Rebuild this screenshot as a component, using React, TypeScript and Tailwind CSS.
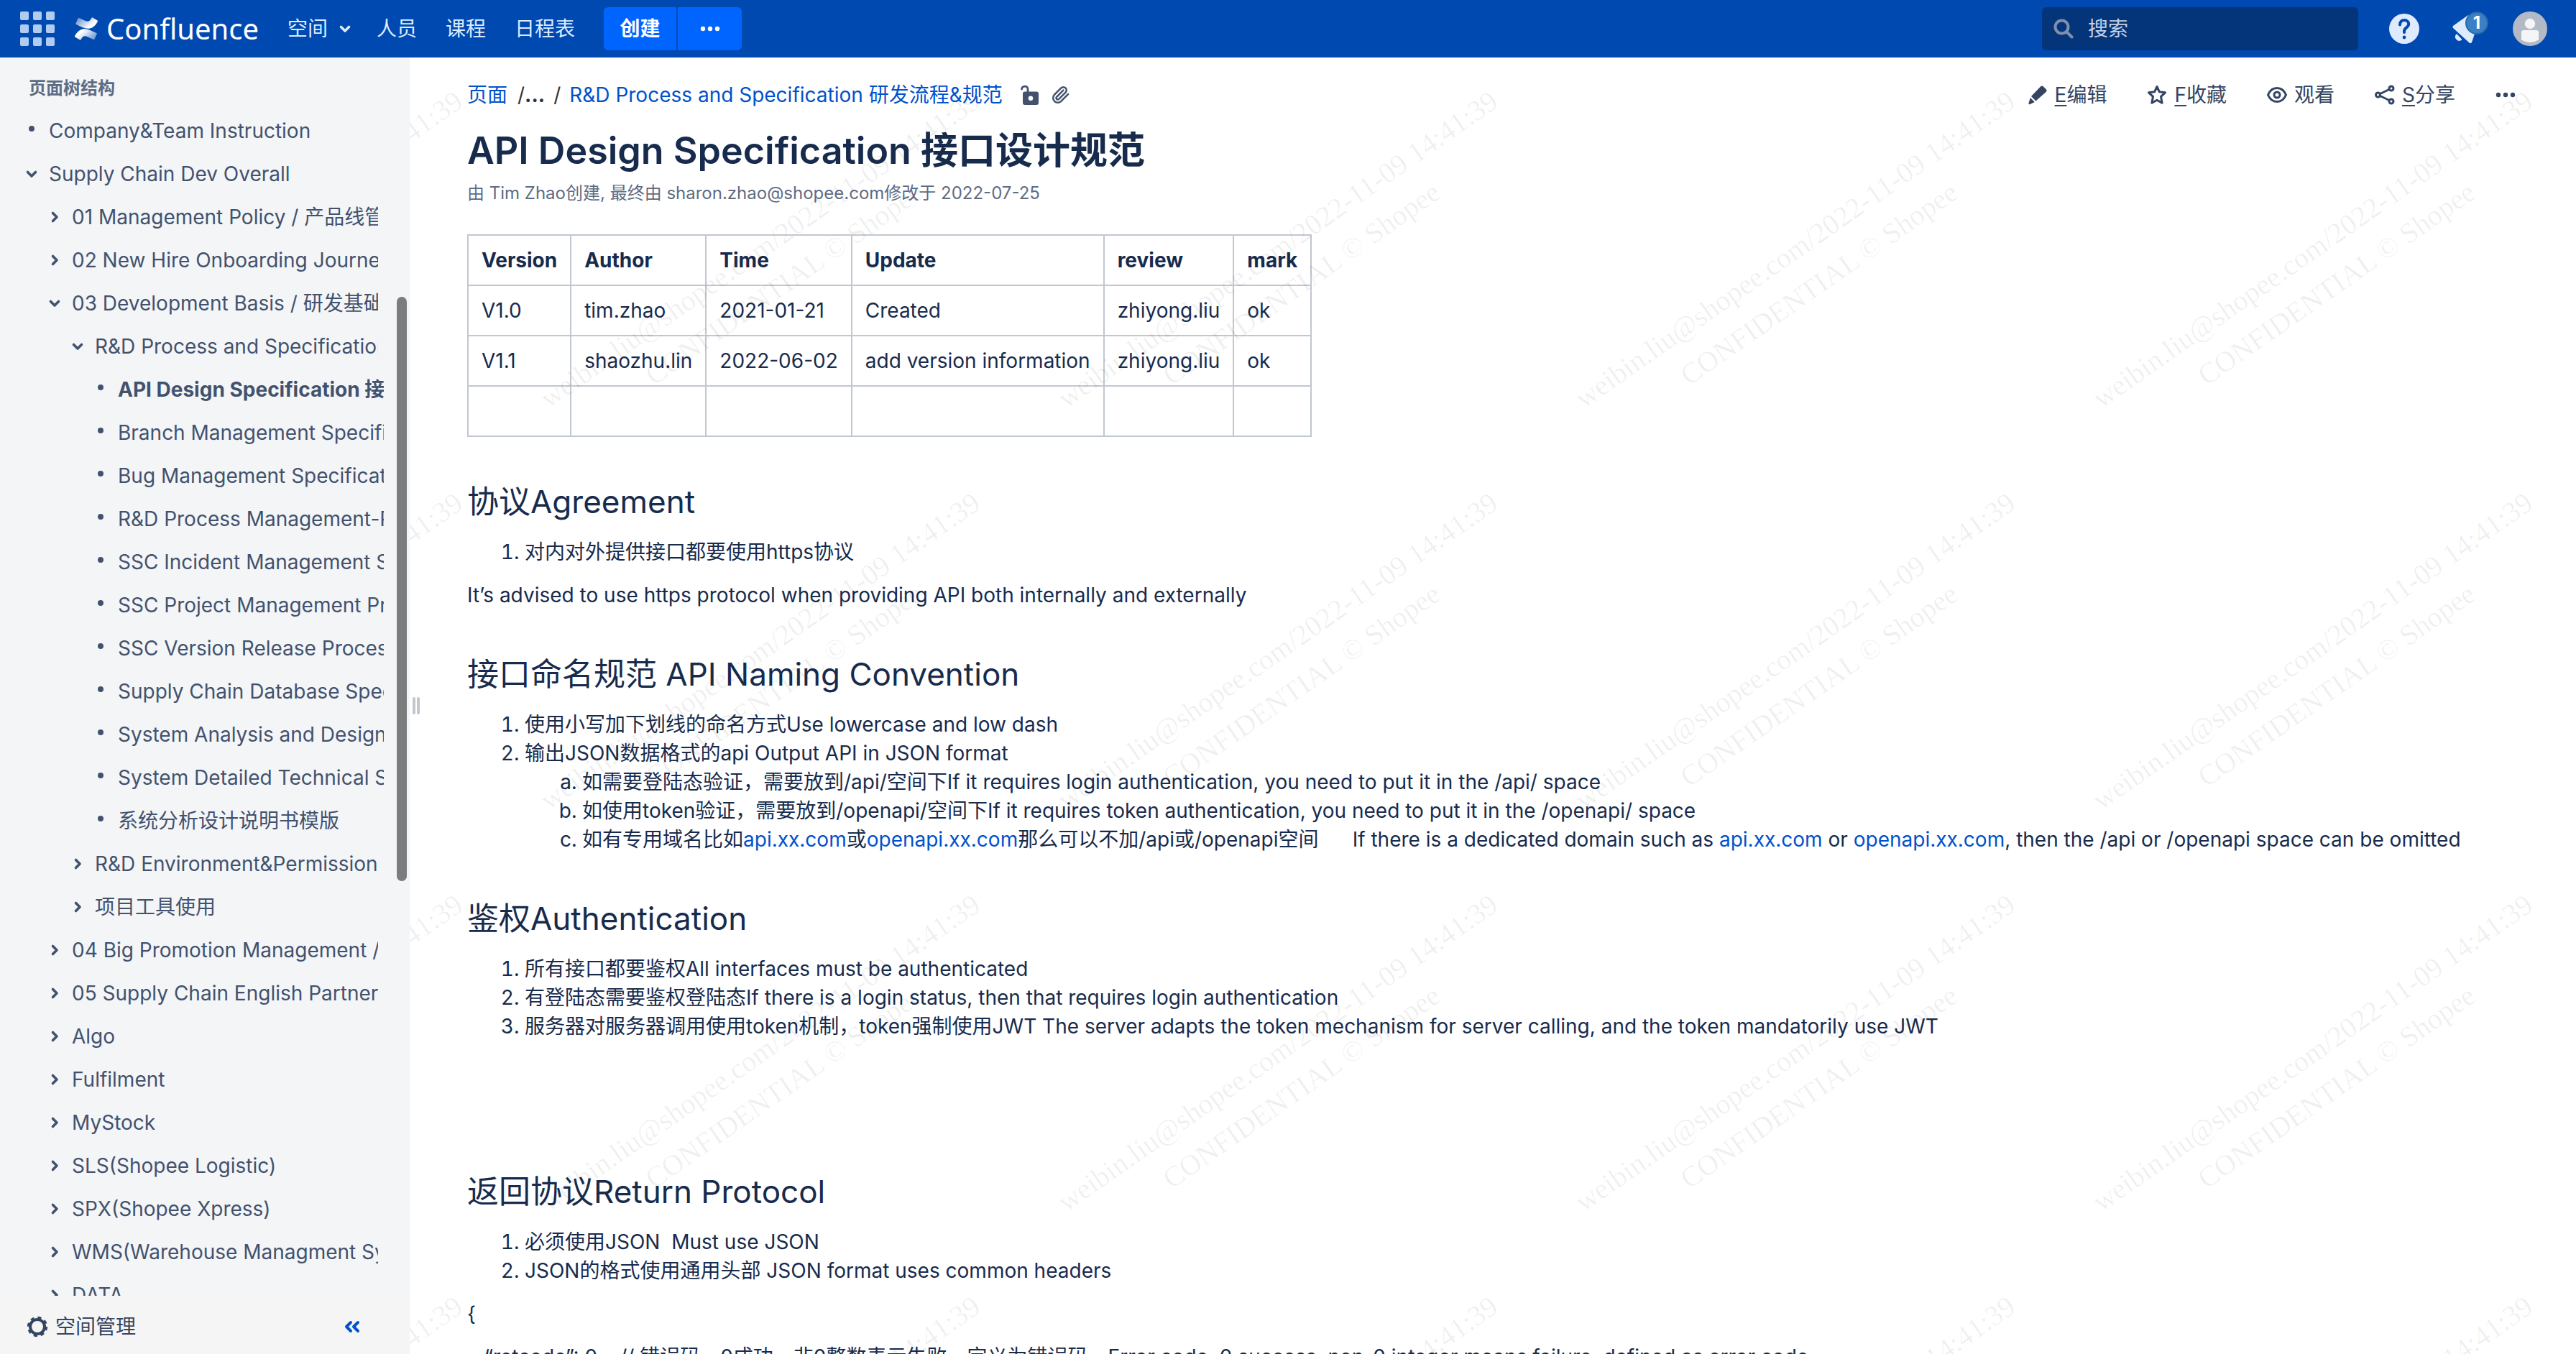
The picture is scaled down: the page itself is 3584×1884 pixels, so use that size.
import type { ReactNode } from 'react';

type Node = { label: string; level: 0 | 1 | 2 | 3; kind: 'leaf' | 'open' | 'closed'; current?: boolean };

const tree: Node[] = [
  { label: 'Company&Team Instruction', level: 0, kind: 'leaf' },
  { label: 'Supply Chain Dev Overall', level: 0, kind: 'open' },
  { label: '01 Management Policy / 产品线管理', level: 1, kind: 'closed' },
  { label: '02 New Hire Onboarding Journey', level: 1, kind: 'closed' },
  { label: '03 Development Basis / 研发基础', level: 1, kind: 'open' },
  { label: 'R&D Process and Specification', level: 2, kind: 'open' },
  { label: 'API Design Specification 接口设计规范', level: 3, kind: 'leaf', current: true },
  { label: 'Branch Management Specification', level: 3, kind: 'leaf' },
  { label: 'Bug Management Specification', level: 3, kind: 'leaf' },
  { label: 'R&D Process Management-Process', level: 3, kind: 'leaf' },
  { label: 'SSC Incident Management Spec', level: 3, kind: 'leaf' },
  { label: 'SSC Project Management Process', level: 3, kind: 'leaf' },
  { label: 'SSC Version Release Process', level: 3, kind: 'leaf' },
  { label: 'Supply Chain Database Specification', level: 3, kind: 'leaf' },
  { label: 'System Analysis and Design', level: 3, kind: 'leaf' },
  { label: 'System Detailed Technical Spec', level: 3, kind: 'leaf' },
  { label: '系统分析设计说明书模版', level: 3, kind: 'leaf' },
  { label: 'R&D Environment&Permission', level: 2, kind: 'closed' },
  { label: '项目工具使用', level: 2, kind: 'closed' },
  { label: '04 Big Promotion Management /', level: 1, kind: 'closed' },
  { label: '05 Supply Chain English Partner', level: 1, kind: 'closed' },
  { label: 'Algo', level: 1, kind: 'closed' },
  { label: 'Fulfilment', level: 1, kind: 'closed' },
  { label: 'MyStock', level: 1, kind: 'closed' },
  { label: 'SLS(Shopee Logistic)', level: 1, kind: 'closed' },
  { label: 'SPX(Shopee Xpress)', level: 1, kind: 'closed' },
  { label: 'WMS(Warehouse Managment System)', level: 1, kind: 'closed' },
  { label: 'DATA', level: 1, kind: 'closed' },
];

const indent = { 0: 'pl-8 pr-11', 1: 'pl-16 pr-11', 2: 'pl-24 pr-11', 3: 'pl-32 pr-9' };

const columns = ['Version', 'Author', 'Time', 'Update', 'review', 'mark'];
const records = [
  ['V1.0', 'tim.zhao', '2021-01-21', 'Created', 'zhiyong.liu', 'ok'],
  ['V1.1', 'shaozhu.lin', '2022-06-02', 'add version information', 'zhiyong.liu', 'ok'],
  ['', '', '', '', '', ''],
];

function Chevron({ open }: { open?: boolean }) {
  return (
    <svg viewBox="0 0 24 24" className="size-6 shrink-0" fill="none" stroke="currentColor" strokeWidth="3.6" strokeLinecap="round" strokeLinejoin="round" aria-hidden="true">
      <path d={open ? 'M6.5 9.5 12 15l5.500-5.500' : 'M9.500 6.500 15 12l-5.500 5.500'} />
    </svg>
  );
}

function Dots({ className }: { className: string }) {
  return (
    <svg viewBox="0 0 28 8" className={className} fill="currentColor" aria-hidden="true">
      <circle cx="4" cy="4" r="3.2" />
      <circle cx="14" cy="4" r="3.200" />
      <circle cx="24" cy="4" r="3.200" />
    </svg>
  );
}

function ConfluenceMark() {
  return (
    <svg viewBox="0 0 24 24" className="size-8" aria-hidden="true">
      <defs>
        <linearGradient id="markTop" x1="0" y1="0.2" x2="0.75" y2="0.6">
          <stop offset="0" stopColor="#fff" stopOpacity="0.4" />
          <stop offset="1" stopColor="#fff" />
        </linearGradient>
        <linearGradient id="markBottom" x1="1" y1="0.8" x2="0.25" y2="0.4">
          <stop offset="0" stopColor="#fff" stopOpacity="0.4" />
          <stop offset="1" stopColor="#fff" />
        </linearGradient>
      </defs>
      <path fill="url(#markBottom)" d="M.87 18.257c-.248.382-.53.875-.763 1.245a.764.764 0 0 0 .255 1.04l4.965 3.054a.764.764 0 0 0 1.058-.26c.199-.332.454-.763.733-1.221 1.967-3.247 3.945-2.853 7.508-1.146l4.957 2.337a.764.764 0 0 0 1.028-.382l2.364-5.346a.764.764 0 0 0-.382-1 599.851 599.851 0 0 1-4.965-2.361C10.911 10.97 5.224 11.185.87 18.257z" />
      <path fill="url(#markTop)" d="M23.131 5.743c.249-.405.531-.875.764-1.25a.764.764 0 0 0-.256-1.034L18.675.404a.764.764 0 0 0-1.058.26c-.195.335-.451.763-.734 1.225-1.966 3.246-3.945 2.85-7.508 1.146L4.437.694a.764.764 0 0 0-1.027.382L1.046 6.422a.764.764 0 0 0 .382 1c1.039.49 3.105 1.467 4.965 2.361 6.698 3.246 12.392 3.029 16.738-4.04z" />
    </svg>
  );
}

function Header() {
  return (
    <header className="flex h-20 shrink-0 items-center bg-[#0049b0] pr-10 pl-7 text-[28px] text-[#deebff]">
      <button type="button" aria-label="应用程序" className="grid grid-cols-3 gap-[6px]">
        {Array.from({ length: 9 }, (_, i) => (
          <span key={i} className="size-3 rounded-[2px] bg-[#b2cbf0]" />
        ))}
      </button>
      <a href="#home" className="ml-7 flex items-center gap-3 text-white">
        <ConfluenceMark />
        <span className="font-['Noto_Sans','Open_Sans',sans-serif] text-[40px] leading-[60px]">Confluence</span>
      </a>
      <nav className="ml-10 flex items-center">
        <button type="button" className="flex items-center gap-3">
          空间
          <Chevron open />
        </button>
        <a href="#people" className="ml-8">人员</a>
        <a href="#courses" className="ml-10">课程</a>
        <a href="#calendar" className="ml-10">日程表</a>
      </nav>
      <div className="ml-10 flex h-[60px] gap-[2px] font-bold text-white">
        <button type="button" className="w-[101px] rounded-l-md bg-[#0065ff]">创建</button>
        <button type="button" aria-label="更多" className="flex w-[89px] items-center justify-center rounded-r-md bg-[#0065ff]">
          <Dots className="h-2 w-7" />
        </button>
      </div>
      <label className="ml-auto flex h-[60px] w-[440px] items-center gap-5 rounded-md bg-[#04357b] pl-4">
        <svg viewBox="0 0 28 28" className="size-7 shrink-0 text-[#7f90ac]" fill="none" stroke="currentColor" strokeWidth="4" strokeLinecap="round" aria-hidden="true">
          <circle cx="11.500" cy="11.500" r="9" />
          <path d="m19 19 6.500 6.500" />
        </svg>
        <input type="search" aria-label="搜索" placeholder="搜索" className="min-w-0 flex-1 bg-transparent outline-none placeholder:text-[#c3d0e4]" />
      </label>
      <button type="button" aria-label="帮助" className="ml-[43px]">
        <svg viewBox="0 0 42 42" className="size-[42px]" aria-hidden="true">
          <circle cx="21" cy="21" r="21" fill="#deebff" />
          <path d="M15 15.500c0-4 2.500-6.500 6.200-6.500 3.600 0 6 2.400 6 5.600 0 4.600-6.200 5-6.200 9.600V26" fill="none" stroke="#0049b0" strokeWidth="4" strokeLinecap="round" />
          <circle cx="21" cy="33" r="2.400" fill="#0049b0" />
        </svg>
      </button>
      <button type="button" aria-label="通知" className="relative ml-[42px] h-12 w-[54px]">
        <svg viewBox="0 0 54 48" className="h-12 w-[54px]" fill="#deebff" aria-hidden="true">
          <path d="M5 20 L26 5 L36 28 L31 43 q-1.500 2-3.500 .500 L5 23 q-1.500-1.500 0-3z" />
          <path d="M10 31.500 a4 4 0 0 0 7 7.500z" stroke="#deebff" strokeLinejoin="round" />
        </svg>
        <span className="absolute top-0 right-0 flex h-8 w-8 items-center justify-center rounded-2xl border-2 border-[#2a67a5] bg-[#3b7fc4] text-[24px] leading-none font-bold text-white">1</span>
      </button>
      <button type="button" aria-label="用户" className="ml-[34px]">
        <svg viewBox="0 0 48 48" className="size-12" aria-hidden="true">
          <circle cx="24" cy="24" r="24" fill="#b3bac5" />
          <circle cx="24" cy="17" r="7.200" fill="#f4f5f7" />
          <path d="M12 29q0-3 3-3h18q3 0 3 3v10.500q-12 7-24 0z" fill="#f4f5f7" />
        </svg>
      </button>
    </header>
  );
}

function Sidebar() {
  return (
    <aside className="relative flex w-[570px] shrink-0 flex-col bg-[#f4f5f7] text-[28px] text-[#42526e]">
      <div className="min-h-0 flex-1 overflow-hidden">
        <h2 className="px-10 pt-[22px] pb-2 text-[24px] leading-[42px] font-bold text-[#5e6c84]">页面树结构</h2>
        <ul>
          {tree.map((node) => (
            <li key={node.label} className={`flex h-[60px] items-center gap-3 ${indent[node.level]}`}>
              {node.kind === 'leaf' ? (
                <span className="flex size-6 shrink-0 items-start justify-center pt-[5px]">
                  <span className="size-2 rounded-full bg-[#42526e]" />
                </span>
              ) : (
                <button type="button" aria-label={node.kind === 'open' ? '折叠' : '展开'}>
                  <Chevron open={node.kind === 'open'} />
                </button>
              )}
              <a href="#page" className={`min-w-0 flex-1 overflow-hidden whitespace-nowrap ${node.current ? 'font-bold' : ''}`}>
                {node.label}
              </a>
            </li>
          ))}
        </ul>
      </div>
      <footer className="flex h-[81px] shrink-0 items-center justify-between bg-[#f5f5f5] pt-1 pr-[69px] pl-[37px]">
        <button type="button" className="flex items-center gap-[10px] text-[#344563]">
          <svg viewBox="0 0 30 30" className="size-[30px]" fill="none" stroke="currentColor" aria-hidden="true">
            <circle cx="15" cy="15" r="10" strokeWidth="4" />
            <circle cx="15" cy="15" r="12.500" strokeWidth="3.400" strokeDasharray="5 4.817" />
          </svg>
          空间管理
        </button>
        <button type="button" aria-label="收起侧边栏" className="text-[#0052cc]">
          <svg viewBox="0 0 22 18" className="h-[18px] w-[22px]" fill="none" stroke="currentColor" strokeWidth="4" strokeLinecap="round" strokeLinejoin="round" aria-hidden="true">
            <path d="M9 3 3 9l6 6M19 3l-6 6 6 6" />
          </svg>
        </button>
      </footer>
      <div className="absolute top-[333px] right-1 h-[813px] w-[14px] rounded-full bg-[#7a7c7e]" />
    </aside>
  );
}

function Action({ icon, children }: { icon: ReactNode; children: ReactNode }) {
  return (
    <button type="button" className="flex items-center gap-[10px]">
      {icon}
      <span>{children}</span>
    </button>
  );
}

function Key({ children }: { children: string }) {
  return <span className="underline decoration-2 underline-offset-4">{children}</span>;
}

function Toolbar() {
  return (
    <div className="flex items-center gap-14 text-[28px] leading-10 text-[#344563]">
      <Action
        icon={
          <svg viewBox="0 0 28 28" className="size-7" fill="currentColor" aria-hidden="true">
            <path d="M18 2.500q2-2 4 0l3.500 3.500q2 2 0 4L11.500 22.500 5 16zM3.800 18l6 6-6.300 3q-2.500 1-2-1.500z" />
          </svg>
        }
      >
        <Key>E</Key>编辑
      </Action>
      <Action
        icon={
          <svg viewBox="0 0 28 28" className="size-7" fill="none" stroke="currentColor" strokeWidth="3" strokeLinejoin="round" aria-hidden="true">
            <path d="m14 2.500 3.400 7.300 8.100 1-6 5.500 1.600 9L14 21.200l-7.100 4.100 1.600-9-6-5.500 8.100-1z" />
          </svg>
        }
      >
        <Key>F</Key>收藏
      </Action>
      <Action
        icon={
          <svg viewBox="0 0 28 28" className="size-7" fill="none" stroke="currentColor" strokeWidth="3" aria-hidden="true">
            <path d="M1.500 14C4 8 8.500 4.500 14 4.500S24 8 26.500 14C24 20 19.500 23.500 14 23.500S4 20 1.500 14z" />
            <circle cx="14" cy="14" r="4" />
          </svg>
        }
      >
        观看
      </Action>
      <Action
        icon={
          <svg viewBox="0 0 28 28" className="size-7" fill="none" stroke="currentColor" strokeWidth="3" aria-hidden="true">
            <circle cx="4.500" cy="14" r="3" />
            <circle cx="23" cy="5" r="3" />
            <circle cx="23" cy="23" r="3" />
            <path d="m7.500 12.500 12.500-6M7.500 15.500l12.500 6" />
          </svg>
        }
      >
        <Key>S</Key>分享
      </Action>
      <button type="button" aria-label="更多操作">
        <Dots className="h-2 w-7" />
      </button>
    </div>
  );
}

function Link({ children }: { children: string }) {
  return <a href="#link" className="text-[#0052cc]">{children}</a>;
}

function Heading({ children }: { children: string }) {
  return <h2 className="mt-[60px] mb-5 text-[44px] leading-[60px] font-normal">{children}</h2>;
}

function Watermark() {
  return (
    <div aria-hidden="true" className="pointer-events-none absolute inset-0 overflow-hidden">
      <div className="absolute top-[11px] -left-[576px] grid auto-rows-[559px] grid-cols-[repeat(5,720px)]">
        {Array.from({ length: 20 }, (_, i) => (
          <div key={i} className="flex items-center justify-center">
            <div className="-rotate-35 text-center font-['Liberation_Serif',serif] text-[40px] leading-[58px] whitespace-nowrap text-black/6">
              weibin.liu@shopee.com/2022-11-09 14:41:39
              <br />
              CONFIDENTIAL © Shopee
            </div>
          </div>
        ))}
      </div>
    </div>
  );
}

export default function App() {
  return (
    <div className="flex h-screen flex-col overflow-hidden bg-white font-['Inter','Noto_Sans_CJK_SC',sans-serif]">
      <Header />
      <div className="flex min-h-0 flex-1">
        <Sidebar />
        <main className="relative min-w-0 flex-1 overflow-hidden pt-8 pr-[84px] pl-20 text-[28px] leading-10 text-[#172b4d]">
          <div className="absolute top-[890px] left-1 flex gap-[2px]">
            <span className="h-6 w-1 rounded-sm bg-[#c1c7d0]" />
            <span className="h-6 w-1 rounded-sm bg-[#c1c7d0]" />
          </div>
          <div className="flex items-center justify-between">
            <nav aria-label="面包屑" className="flex items-center">
              <Link>页面</Link>
              <span className="ml-[14px] text-[#333]">/</span>
              <button type="button" className="font-bold text-[#333]">...</button>
              <span className="mx-3 text-[#333]">/</span>
              <Link>R&amp;D Process and Specification 研发流程&amp;规范</Link>
              <button type="button" aria-label="无限制" className="ml-6 text-[#42526e]">
                <svg viewBox="0 0 28 28" className="size-7" aria-hidden="true">
                  <path d="M2.500 6C3 1.200 11 .500 11 6v6" fill="none" stroke="currentColor" strokeWidth="2.800" strokeLinecap="round" />
                  <path fillRule="evenodd" fill="currentColor" d="M7 9.500h16a3 3 0 0 1 3 3V25a3 3 0 0 1-3 3H7a3 3 0 0 1-3-3V12.500a3 3 0 0 1 3-3zM15 15.500a3.200 3.200 0 1 0 0 6.400 3.200 3.200 0 0 0 0-6.400z" />
                </svg>
              </button>
              <button type="button" aria-label="附件" className="ml-4 text-[#42526e]">
                <svg viewBox="0 0 24 24" className="size-[26px]" fill="none" stroke="currentColor" strokeWidth="2.300" strokeLinecap="round" aria-hidden="true">
                  <path d="m21.440 11.050-9.190 9.190a6 6 0 0 1-8.490-8.490l8.570-8.570A4 4 0 1 1 18 8.840l-8.590 8.570a2 2 0 0 1-2.830-2.830l8.490-8.480" />
                </svg>
              </button>
            </nav>
            <Toolbar />
          </div>
          <h1 className="mt-6 text-[52px] leading-[68px] font-semibold">API Design Specification 接口设计规范</h1>
          <p className="mt-[5px] text-[24px] text-[#5e6c84]">由 Tim Zhao创建, 最终由 sharon.zhao@shopee.com修改于 2022-07-25</p>
          <table className="mt-[37px] border-collapse text-left">
            <thead>
              <tr className="h-[70px]">
                {columns.map((name) => (
                  <th key={name} scope="col" className="border-2 border-[#c1c7d0] px-[18px] font-bold">{name}</th>
                ))}
              </tr>
            </thead>
            <tbody>
              {records.map((cells, r) => (
                <tr key={r} className="h-[70px]">
                  {cells.map((cell, c) => (
                    <td key={c} className="border-2 border-[#c1c7d0] px-[18px]">{cell}</td>
                  ))}
                </tr>
              ))}
            </tbody>
          </table>

          <Heading>协议Agreement</Heading>
          <ol className="mb-5 list-decimal pl-20">
            <li>对内对外提供接口都要使用https协议</li>
          </ol>
          <p>It’s advised to use https protocol when providing API both internally and externally</p>

          <Heading>接口命名规范 API Naming Convention</Heading>
          <ol className="list-decimal pl-20">
            <li>使用小写加下划线的命名方式Use lowercase and low dash</li>
            <li>
              输出JSON数据格式的api Output API in JSON format
              <ol className="list-[lower-alpha] pl-20">
                <li>如需要登陆态验证，需要放到/api/空间下If it requires login authentication, you need to put it in the /api/ space</li>
                <li>如使用token验证，需要放到/openapi/空间下If it requires token authentication, you need to put it in the /openapi/ space</li>
                <li>
                  如有专用域名比如<Link>api.xx.com</Link>或<Link>openapi.xx.com</Link>那么可以不加/api或/openapi空间{'\u00a0\u00a0\u00a0\u00a0\u00a0 '}If there is a dedicated domain such as <Link>api.xx.com</Link> or <Link>openapi.xx.com</Link>, then the /api or /openapi space can be omitted
                </li>
              </ol>
            </li>
          </ol>

          <Heading>鉴权Authentication</Heading>
          <ol className="list-decimal pl-20">
            <li>所有接口都要鉴权All interfaces must be authenticated</li>
            <li>有登陆态需要鉴权登陆态If there is a login status, then that requires login authentication</li>
            <li>服务器对服务器调用使用token机制，token强制使用JWT The server adapts the token mechanism for server calling, and the token mandatorily use JWT</li>
          </ol>
          <p className="mt-5 h-10" />
          <p className="mt-5 h-10" />

          <Heading>返回协议Return Protocol</Heading>
          <ol className="mb-5 list-decimal pl-20">
            <li>必须使用JSON&nbsp; Must use JSON</li>
            <li>JSON的格式使用通用头部 JSON format uses common headers</li>
          </ol>
          <p className="mb-5">{'{'}</p>
          <p className="whitespace-pre">{'   “retcode”: 0,   // 错误码，0成功，非0整数表示失败，定义为错误码，Error code, 0 success, non-0 integer means failure, defined as error code'}</p>
          <Watermark />
        </main>
      </div>
    </div>
  );
}
